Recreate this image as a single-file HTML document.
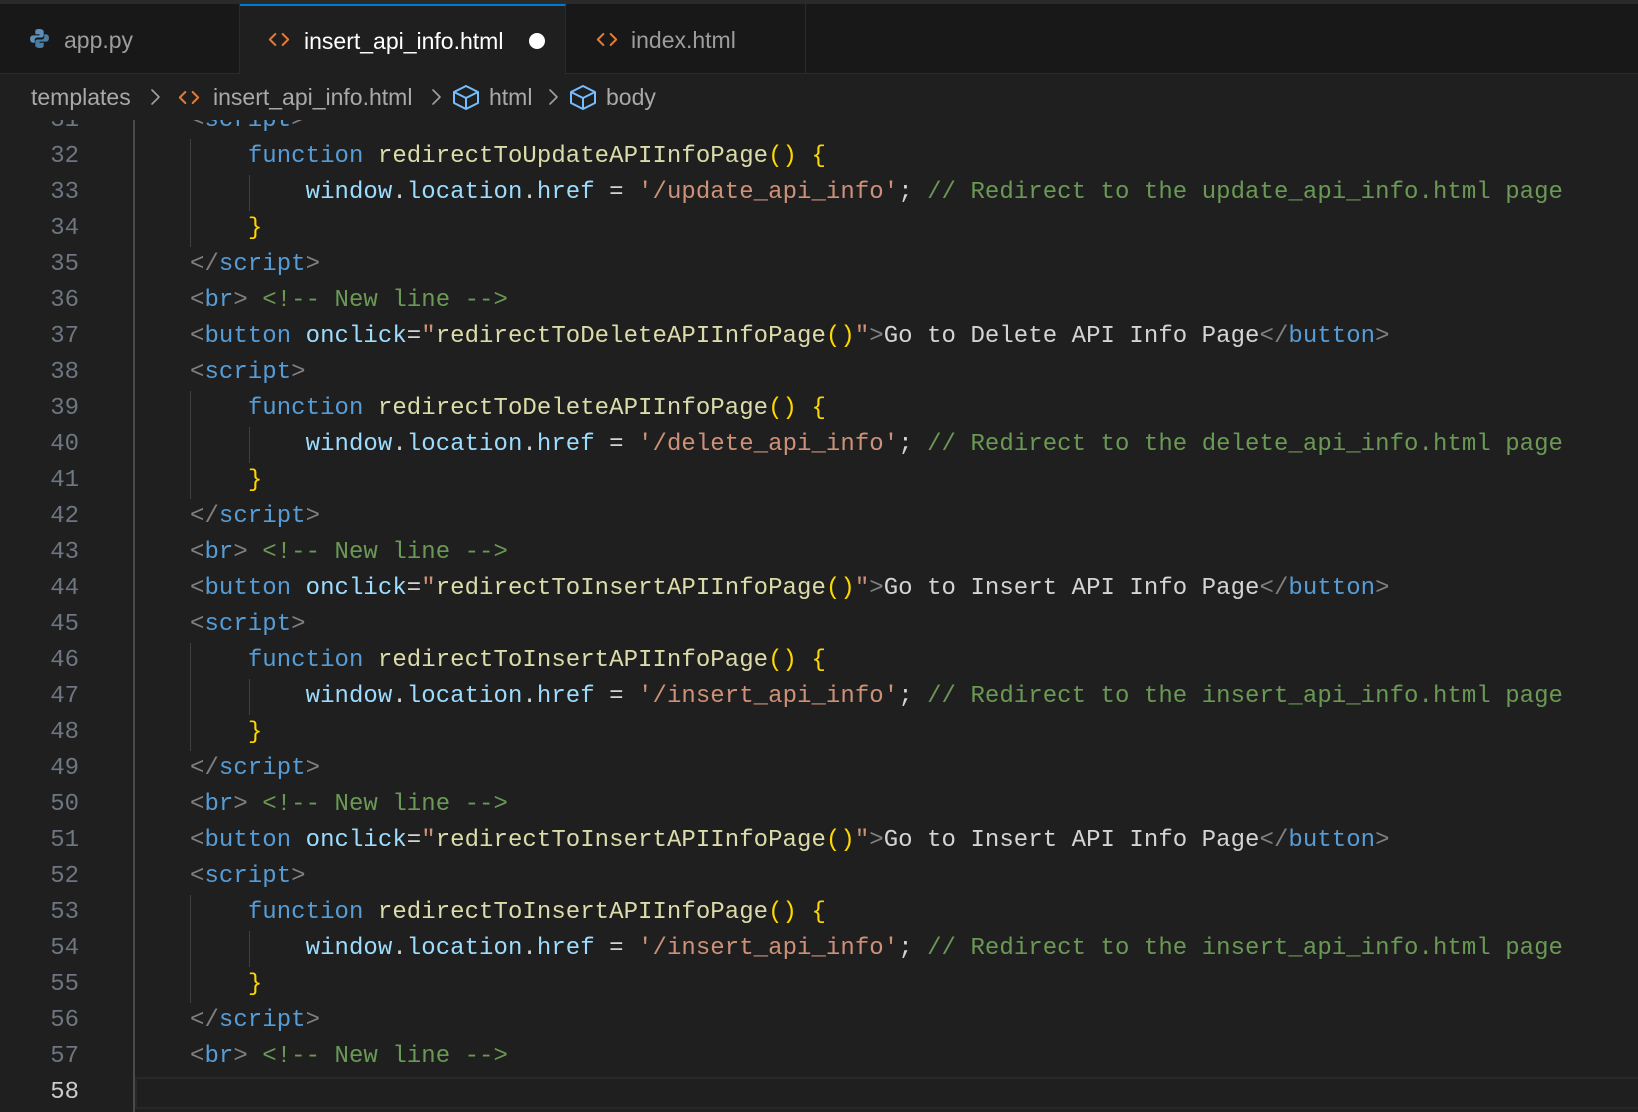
<!DOCTYPE html>
<html><head><meta charset="utf-8"><style>
*{margin:0;padding:0;box-sizing:border-box}
html,body{width:1638px;height:1112px;overflow:hidden;background:#1f1f1f}
body{position:relative;font-family:"Liberation Sans",sans-serif}
#tabs{position:absolute;left:0;top:0;width:1638px;height:74px;background:#181818;border-top:4px solid #2a2a2a;border-bottom:1px solid #2b2b2b}
.tab{position:absolute;top:0;height:69px;border-right:1px solid #2b2b2b;font-size:23px;color:#9d9d9d;line-height:73px}
.tab.active{background:#1f1f1f;color:#fff;border-top:2px solid #0078d4;height:70px}
.ico{position:absolute}
#crumb{position:absolute;left:0;top:74px;width:1638px;height:46px;background:#1f1f1f;z-index:5;font-size:23px;color:#a9a9a9;line-height:46px}
#crumb span,#crumb svg{position:absolute}
#code{position:absolute;left:0;top:103px;width:1638px}
.ln{position:absolute;left:0;width:79px;text-align:right;font:24px/36px "Liberation Mono",monospace;color:#6e7681}
.cl{position:absolute;left:190px;font:24px/36px "Liberation Mono",monospace;color:#d4d4d4;white-space:pre;letter-spacing:0.05px}
.p{color:#808080}.t{color:#569cd6}.a{color:#9cdcfe}.s{color:#ce9178}.c{color:#6a9955}.f{color:#dcdcaa}.b{color:#ffd700}.k{color:#569cd6}.v{color:#9cdcfe}
.g{position:absolute;width:1px;background:#404040}
</style></head><body>
<svg width="0" height="0" style="position:absolute"><defs>
<symbol id="ang" viewBox="0 0 24 20"><path d="M8 4L2 10l6 6M16 4l6 6-6 6" fill="none" stroke="#e37933" stroke-width="2.2" stroke-linecap="round" stroke-linejoin="round"/></symbol>
<symbol id="chev" viewBox="0 0 12 20"><path d="M3 3l7 7-7 7" fill="none" stroke="#a0a0a0" stroke-width="1.6" stroke-linecap="round" stroke-linejoin="round"/></symbol>
<symbol id="cube" viewBox="0 0 28 26"><path d="M14 2L26 8v11L14 25 2 19V8z M2 8l12 6 12-6 M14 14v11" fill="none" stroke="#75beff" stroke-width="2" stroke-linejoin="round"/></symbol>
</defs></svg>
<div id="tabs">
 <div class="tab" style="left:0;width:240px">
  <svg style="position:absolute;left:29px;top:24px" width="21" height="21" viewBox="0 0 20 20"><path d="M9.5 1C6 1 6 2.5 6 3.5V6h4v1H4C2 7 1 8.5 1 10.5S2 14 4 14h1.5v-2.5c0-1.5 1-2.5 2.5-2.5h4c1.2 0 2-.8 2-2V3.5C14 2 12.5 1 9.5 1z" fill="#5d8fb8"/><path d="M10.5 19c3.5 0 3.5-1.5 3.5-2.5V14h-4v-1h6c2 0 3-1.5 3-3.5S18 6 16 6h-1.5v2.5c0 1.5-1 2.5-2.5 2.5H8c-1.2 0-2 .8-2 2v3.5C6 18 7.5 19 10.5 19z" fill="#4a7da3"/></svg>
  <span style="position:absolute;left:64px">app.py</span></div>
 <div class="tab active" style="left:240px;width:326px;line-height:71px">
  <svg class="ico" style="left:28px;top:24px" width="22" height="19"><use href="#ang"/></svg>
  <span style="position:absolute;left:64px">insert_api_info.html</span>
  <span style="position:absolute;left:289px;top:27px;width:16px;height:16px;border-radius:50%;background:#fff"></span></div>
 <div class="tab" style="left:566px;width:240px">
  <svg class="ico" style="left:30px;top:26px" width="22" height="19"><use href="#ang"/></svg>
  <span style="position:absolute;left:65px">index.html</span></div>
</div>
<div id="crumb">
 <span style="left:31px">templates</span>
 <svg style="left:149px;top:13px" width="12" height="20"><use href="#chev"/></svg>
 <svg style="left:178px;top:14px" width="22" height="19"><use href="#ang"/></svg>
 <span style="left:213px">insert_api_info.html</span>
 <svg style="left:430px;top:13px" width="12" height="20"><use href="#chev"/></svg>
 <svg style="left:452px;top:10px" width="28" height="26"><use href="#cube"/></svg>
 <span style="left:489px">html</span>
 <svg style="left:547px;top:13px" width="12" height="20"><use href="#chev"/></svg>
 <svg style="left:569px;top:10px" width="28" height="26"><use href="#cube"/></svg>
 <span style="left:606px">body</span>
</div>
<div style="position:absolute;left:133px;top:120px;width:2px;height:992px;background:#4a4a4a"></div>
<div style="position:absolute;left:135px;top:1077px;width:1503px;height:32px;border:2px solid #282828;border-right:none"></div>
<div id="code">
<div class="g" style="left:190px;top:36px;height:108px"></div>
<div class="g" style="left:249px;top:72px;height:36px"></div>
<div class="g" style="left:190px;top:288px;height:108px"></div>
<div class="g" style="left:249px;top:324px;height:36px"></div>
<div class="g" style="left:190px;top:540px;height:108px"></div>
<div class="g" style="left:249px;top:576px;height:36px"></div>
<div class="g" style="left:190px;top:792px;height:108px"></div>
<div class="g" style="left:249px;top:828px;height:36px"></div>

<div class="ln" style="top:0">31</div><div class="cl" style="top:0"><span class="p">&lt;</span><span class="t">script</span><span class="p">&gt;</span></div>
<div class="ln" style="top:36px">32</div><div class="cl" style="top:36px">    <span class="k">function</span> <span class="f">redirectToUpdateAPIInfoPage</span><span class="b">()</span> <span class="b">{</span></div>
<div class="ln" style="top:72px">33</div><div class="cl" style="top:72px">        <span class="v">window</span>.<span class="v">location</span>.<span class="v">href</span> = <span class="s">'/update_api_info'</span>; <span class="c">// Redirect to the update_api_info.html page</span></div>
<div class="ln" style="top:108px">34</div><div class="cl" style="top:108px">    <span class="b">}</span></div>
<div class="ln" style="top:144px">35</div><div class="cl" style="top:144px"><span class="p">&lt;/</span><span class="t">script</span><span class="p">&gt;</span></div>
<div class="ln" style="top:180px">36</div><div class="cl" style="top:180px"><span class="p">&lt;</span><span class="t">br</span><span class="p">&gt;</span> <span class="c">&lt;!-- New line --&gt;</span></div>
<div class="ln" style="top:216px">37</div><div class="cl" style="top:216px"><span class="p">&lt;</span><span class="t">button</span> <span class="a">onclick</span>=<span class="s">"</span><span class="f">redirectToDeleteAPIInfoPage</span><span class="b">()</span><span class="s">"</span><span class="p">&gt;</span>Go to Delete API Info Page<span class="p">&lt;/</span><span class="t">button</span><span class="p">&gt;</span></div>
<div class="ln" style="top:252px">38</div><div class="cl" style="top:252px"><span class="p">&lt;</span><span class="t">script</span><span class="p">&gt;</span></div>
<div class="ln" style="top:288px">39</div><div class="cl" style="top:288px">    <span class="k">function</span> <span class="f">redirectToDeleteAPIInfoPage</span><span class="b">()</span> <span class="b">{</span></div>
<div class="ln" style="top:324px">40</div><div class="cl" style="top:324px">        <span class="v">window</span>.<span class="v">location</span>.<span class="v">href</span> = <span class="s">'/delete_api_info'</span>; <span class="c">// Redirect to the delete_api_info.html page</span></div>
<div class="ln" style="top:360px">41</div><div class="cl" style="top:360px">    <span class="b">}</span></div>
<div class="ln" style="top:396px">42</div><div class="cl" style="top:396px"><span class="p">&lt;/</span><span class="t">script</span><span class="p">&gt;</span></div>
<div class="ln" style="top:432px">43</div><div class="cl" style="top:432px"><span class="p">&lt;</span><span class="t">br</span><span class="p">&gt;</span> <span class="c">&lt;!-- New line --&gt;</span></div>
<div class="ln" style="top:468px">44</div><div class="cl" style="top:468px"><span class="p">&lt;</span><span class="t">button</span> <span class="a">onclick</span>=<span class="s">"</span><span class="f">redirectToInsertAPIInfoPage</span><span class="b">()</span><span class="s">"</span><span class="p">&gt;</span>Go to Insert API Info Page<span class="p">&lt;/</span><span class="t">button</span><span class="p">&gt;</span></div>
<div class="ln" style="top:504px">45</div><div class="cl" style="top:504px"><span class="p">&lt;</span><span class="t">script</span><span class="p">&gt;</span></div>
<div class="ln" style="top:540px">46</div><div class="cl" style="top:540px">    <span class="k">function</span> <span class="f">redirectToInsertAPIInfoPage</span><span class="b">()</span> <span class="b">{</span></div>
<div class="ln" style="top:576px">47</div><div class="cl" style="top:576px">        <span class="v">window</span>.<span class="v">location</span>.<span class="v">href</span> = <span class="s">'/insert_api_info'</span>; <span class="c">// Redirect to the insert_api_info.html page</span></div>
<div class="ln" style="top:612px">48</div><div class="cl" style="top:612px">    <span class="b">}</span></div>
<div class="ln" style="top:648px">49</div><div class="cl" style="top:648px"><span class="p">&lt;/</span><span class="t">script</span><span class="p">&gt;</span></div>
<div class="ln" style="top:684px">50</div><div class="cl" style="top:684px"><span class="p">&lt;</span><span class="t">br</span><span class="p">&gt;</span> <span class="c">&lt;!-- New line --&gt;</span></div>
<div class="ln" style="top:720px">51</div><div class="cl" style="top:720px"><span class="p">&lt;</span><span class="t">button</span> <span class="a">onclick</span>=<span class="s">"</span><span class="f">redirectToInsertAPIInfoPage</span><span class="b">()</span><span class="s">"</span><span class="p">&gt;</span>Go to Insert API Info Page<span class="p">&lt;/</span><span class="t">button</span><span class="p">&gt;</span></div>
<div class="ln" style="top:756px">52</div><div class="cl" style="top:756px"><span class="p">&lt;</span><span class="t">script</span><span class="p">&gt;</span></div>
<div class="ln" style="top:792px">53</div><div class="cl" style="top:792px">    <span class="k">function</span> <span class="f">redirectToInsertAPIInfoPage</span><span class="b">()</span> <span class="b">{</span></div>
<div class="ln" style="top:828px">54</div><div class="cl" style="top:828px">        <span class="v">window</span>.<span class="v">location</span>.<span class="v">href</span> = <span class="s">'/insert_api_info'</span>; <span class="c">// Redirect to the insert_api_info.html page</span></div>
<div class="ln" style="top:864px">55</div><div class="cl" style="top:864px">    <span class="b">}</span></div>
<div class="ln" style="top:900px">56</div><div class="cl" style="top:900px"><span class="p">&lt;/</span><span class="t">script</span><span class="p">&gt;</span></div>
<div class="ln" style="top:936px">57</div><div class="cl" style="top:936px"><span class="p">&lt;</span><span class="t">br</span><span class="p">&gt;</span> <span class="c">&lt;!-- New line --&gt;</span></div>
<div class="ln" style="top:972px;color:#cccccc">58</div>
</div>
</body></html>
